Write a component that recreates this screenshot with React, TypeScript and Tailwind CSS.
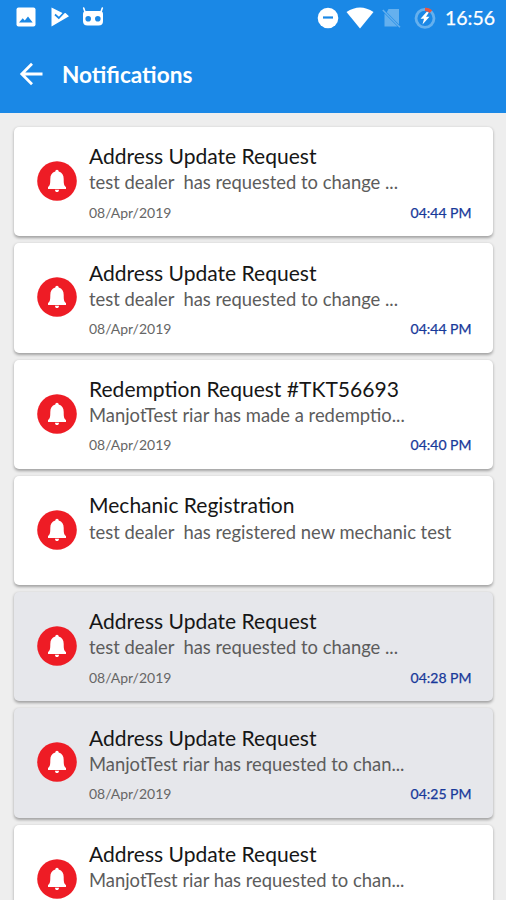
import React from 'react';

interface Notification {
  id: number;
  title: string;
  message: string;
  date?: string;
  time?: string;
  read?: boolean;
}

const notifications: Notification[] = [
  { id: 1, title: 'Address Update Request', message: 'test dealer  has requested to change ...', date: '08/Apr/2019', time: '04:44 PM' },
  { id: 2, title: 'Address Update Request', message: 'test dealer  has requested to change ...', date: '08/Apr/2019', time: '04:44 PM' },
  { id: 3, title: 'Redemption Request #TKT56693', message: 'ManjotTest riar has made a redemptio...', date: '08/Apr/2019', time: '04:40 PM' },
  { id: 4, title: 'Mechanic Registration', message: 'test dealer  has registered new mechanic test' },
  { id: 5, title: 'Address Update Request', message: 'test dealer  has requested to change ...', date: '08/Apr/2019', time: '04:28 PM', read: true },
  { id: 6, title: 'Address Update Request', message: 'ManjotTest riar has requested to chan...', date: '08/Apr/2019', time: '04:25 PM', read: true },
  { id: 7, title: 'Address Update Request', message: 'ManjotTest riar has requested to chan...' },
];

const StatusBar: React.FC = () => (
  <div className="flex h-[35px] items-center justify-between pl-4 pr-[11px]">
    <div className="flex items-center gap-[14px]">
      <svg className="-mt-px h-5 w-5" viewBox="0 0 20 20">
        <rect x="0.5" y="0.5" width="19" height="19" rx="2" fill="#fff" />
        <path d="M3 15.5L6.7 11.2L8.8 13.5L12 9.5L16.7 15.5Z" fill="#1a88e6" />
      </svg>
      <svg className="-mt-px h-5 w-5" viewBox="0 0 20 20">
        <path d="M1.5 0.6L13 6.2L15.500 6L19 9.200L1.500 19.500Z" fill="#fff" />
        <path d="M5 7.500L8.800 11L15.500 4" fill="none" stroke="#1a88e6" strokeWidth="1.700" />
      </svg>
      <svg className="-ml-[2px] -mt-px h-5 w-[22px]" viewBox="0 0 22 20">
        <path d="M1.7 1L3 5M20.3 1L19 5" stroke="#fff" strokeWidth="1.6" strokeLinecap="round" />
        <path d="M1 7Q1 4 4.5 4H17.5Q21 4 21 7V14Q21 18.5 16.5 18.5H5.5Q1 18.5 1 14Z" fill="#fff" />
        <circle cx="6.2" cy="11.8" r="2.8" fill="#1a88e6" />
        <circle cx="15.8" cy="11.8" r="2.8" fill="#1a88e6" />
      </svg>
    </div>
    <div className="flex items-center">
      <svg className="h-[22px] w-[22px]" viewBox="0 0 22 22">
        <circle cx="11" cy="11" r="10.3" fill="#fff" />
        <path d="M6 10.5H16" stroke="#1a88e6" strokeWidth="2.2" />
      </svg>
      <svg className="ml-[7px] h-[22px] w-7" viewBox="0 0 28 22">
        <path d="M0.5 5Q14 -4 27.5 5L14 21.5Z" fill="#fff" />
      </svg>
      <svg className="ml-[8px] h-5 w-5" viewBox="0 0 20 20">
        <path d="M6.5 1H17V16.500L4.800 4.200Z" fill="#65b0ee" />
        <path d="M2.500 5.500L15.500 18.500H2.500Z" fill="#65b0ee" />
        <path d="M0.800 2L18 19.200" stroke="#65b0ee" strokeWidth="1.500" />
      </svg>
      <svg className="ml-[12px] h-[22px] w-[22px]" viewBox="0 0 22 22">
        <circle cx="11" cy="11.3" r="9" fill="none" stroke="#65b0ee" strokeWidth="2.8" />
        <path d="M11 2.3A9 9 0 0 1 17 4.6" fill="none" stroke="#e65643" strokeWidth="3.5" />
        <path d="M12.8 4.8L6.5 11.8H10L8.5 17.5L15.5 9.8H12L14.8 5.5Z" fill="#fff" />
      </svg>
      <span className="ml-[9px] w-[50px] whitespace-nowrap text-[19.5px] leading-none [-webkit-text-stroke:0.25px_white]">16:56</span>
    </div>
  </div>
);

const BellBadge: React.FC = () => (
  <svg className="-mt-px h-10 w-10 shrink-0" viewBox="0 0 40 40">
    <circle cx="20" cy="20" r="19.8" fill="#ee1c25" />
    <path
      d="M20 8.8C21 8.8 21.6 9.5 21.7 10.5C25.2 11.5 26.7 14 26.7 18C26.7 23 27 24.5 29 26V28H11V26C13 24.5 13.3 23 13.3 18C13.3 14 14.8 11.5 18.3 10.5C18.4 9.5 19 8.8 20 8.8ZM18 28.7H22C22 30.2 21.2 31 20 31C18.8 31 18 30.2 18 28.7Z"
      fill="#fff"
    />
  </svg>
);

const NotificationCard: React.FC<{ item: Notification }> = ({ item }) => (
  <li
    className={`flex h-[109.25px] shrink-0 items-center rounded-[5px] pl-[23px] pr-[21.5px] shadow-[0_1.5px_3px_rgba(0,0,0,0.32)] ${
      item.read ? 'bg-[#e6e7eb]' : 'bg-white'
    }`}
  >
    <BellBadge />
    <div className="ml-3 flex h-full min-w-0 flex-1 flex-col pt-[15.4px]">
      <h2 className="whitespace-nowrap text-[21.06px] leading-7 text-[#161616]">{item.title}</h2>
      <p className={`whitespace-pre text-[18.4px] leading-[25px] text-[#5c5c5c] ${item.id === 4 ? 'pt-px' : ''}`}>{item.message}</p>
      {item.date && (
        <div className="mt-[7.6px] flex justify-between text-[14px] leading-5">
          <span className="text-[#666]">{item.date}</span>
          <span className="text-[#18399a] [-webkit-text-stroke:0.25px_#18399a]">{item.time}</span>
        </div>
      )}
    </div>
  </li>
);

export default function App() {
  return (
    <div className="flex h-[900px] w-[506px] flex-col overflow-hidden bg-[#eeeeee] font-['Lato',sans-serif]">
      <header className="h-[113px] shrink-0 bg-[#1a88e6] text-white">
        <StatusBar />
        <div className="flex h-[77px] items-center pl-[19px]">
          <button aria-label="Back">
            <svg className="h-6 w-6" viewBox="0 0 24 24" fill="none" stroke="#fff" strokeWidth="2.8">
              <path d="M23.5 12H3M13 1.8L2.8 12L13 22.2" />
            </svg>
          </button>
          <h1 className="ml-[19px] pt-[3px] text-[22.6px] font-bold leading-none">Notifications</h1>
        </div>
      </header>
      <ul className="flex flex-col gap-[7px] pl-[14px] pr-[13px] pt-[14px]">
        {notifications.map(item => (
          <NotificationCard key={item.id} item={item} />
        ))}
      </ul>
    </div>
  );
}
